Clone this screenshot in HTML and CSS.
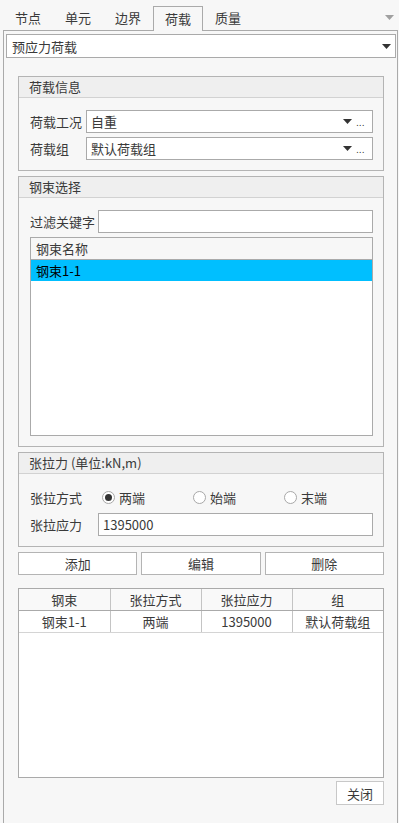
FILE: index.html
```html
<!DOCTYPE html>
<html lang="zh-CN">

<head>
    <meta charset="UTF-8" />
    <meta name="viewport" content="width=device-width, initial-scale=1.0" />
    <title>预应力荷载</title>
    <link rel="stylesheet" href="styles.css">
</head>

<body>

    <div class="tabs">
        <div class="tab">节点</div>
        <div class="tab">单元</div>
        <div class="tab">边界</div>
        <div class="tab active">荷载</div>
        <div class="tab">质量</div>
        <svg class="tabs-menu" width="9" height="5" viewBox="0 0 9 5"><path d="M0 0H9L4.5 5Z" fill="#a0a0a0" /></svg>
    </div>

    <div class="panel">
        <div class="select main-select">
            <span class="value">预应力荷载</span>
            <svg class="arrow" width="9" height="5" viewBox="0 0 9 5"><path d="M0 0H9L4.5 5Z" /></svg>
        </div>

        <div class="content">
            <section class="group">
                <div class="group-title">荷载信息</div>
                <div class="group-body">
                    <div class="field short">
                        <label>荷载工况</label>
                        <div class="select">
                            <span class="value">自重</span>
                            <svg class="arrow" width="9" height="5" viewBox="0 0 9 5"><path d="M0 0H9L4.5 5Z" /></svg>
                            <span class="more">...</span>
                        </div>
                    </div>
                    <div class="field short">
                        <label>荷载组</label>
                        <div class="select">
                            <span class="value">默认荷载组</span>
                            <svg class="arrow" width="9" height="5" viewBox="0 0 9 5"><path d="M0 0H9L4.5 5Z" /></svg>
                            <span class="more">...</span>
                        </div>
                    </div>
                </div>
            </section>

            <section class="group">
                <div class="group-title">钢束选择</div>
                <div class="group-body">
                    <div class="field">
                        <label>过滤关键字</label>
                        <div class="input"></div>
                    </div>
                    <div class="list">
                        <div class="list-head">钢束名称</div>
                        <div class="list-item selected">钢束1-1</div>
                    </div>
                </div>
            </section>

            <section class="group">
                <div class="group-title">张拉力 (单位:kN,m)</div>
                <div class="group-body">
                    <div class="field">
                        <label>张拉方式</label>
                        <div class="radios">
                            <span class="radio checked"><i></i>两端</span>
                            <span class="radio"><i></i>始端</span>
                            <span class="radio"><i></i>末端</span>
                        </div>
                    </div>
                    <div class="field">
                        <label>张拉应力</label>
                        <div class="input">1395000</div>
                    </div>
                </div>
            </section>

            <div class="actions">
                <button>添加</button>
                <button>编辑</button>
                <button>删除</button>
            </div>

            <div class="grid">
                <table>
                    <thead>
                        <tr>
                            <th>钢束</th>
                            <th>张拉方式</th>
                            <th>张拉应力</th>
                            <th>组</th>
                        </tr>
                    </thead>
                    <tbody>
                        <tr>
                            <td>钢束1-1</td>
                            <td>两端</td>
                            <td>1395000</td>
                            <td>默认荷载组</td>
                        </tr>
                    </tbody>
                </table>
            </div>

            <div class="footer">
                <button class="close">关闭</button>
            </div>
        </div>
    </div>

</body>

</html>
```

FILE: styles.css
```css
body {
    margin: 0;
    width: 399px;
    height: 823px;
    overflow: hidden;
    background: #f7f7f7;
    font-family: "Noto Sans CJK SC", "Noto Sans", sans-serif;
    font-size: 13px;
    color: #3a3a3a;
}

/* tab strip */
.tabs {
    position: relative;
    display: flex;
    align-items: flex-end;
    height: 30px;
    padding-left: 3px;
}

.tab {
    width: 50px;
    height: 24px;
    line-height: 24px;
    text-align: center;
    box-sizing: border-box;
}

.tab.active {
    height: 25px;
    margin-bottom: -1px;
    border: 1px solid #aaa;
    border-bottom: none;
    background: #f7f7f7;
    position: relative;
    z-index: 1;
    line-height: 23px;
}

.tabs-menu {
    position: absolute;
    right: 5px;
    top: 15px;
}

.panel {
    margin-left: 3px;
    width: 395px;
    height: 793px;
    box-sizing: border-box;
    border: 1px solid #aaa;
    border-bottom: none;
    padding-top: 3px;
}

/* combo boxes and text boxes */
.select,
.input {
    display: flex;
    align-items: center;
    height: 23px;
    box-sizing: border-box;
    border: 1px solid #aaa;
    background: #fff;
    padding-left: 4px;
}

.select .value {
    flex: 1;
}

.arrow {
    fill: #333;
}

.main-select {
    margin: 0 1px 0 2px;
    height: 24px;
    padding-left: 5px;
    padding-right: 4px;
}

.more {
    width: 14px;
    margin-left: 4px;
    font-family: "DejaVu Sans", sans-serif;
    font-size: 9px;
    line-height: 9px;
    color: #333;
    padding-top: 3px;
}

.content {
    margin: 18px 13px 0 14px;
}

/* group boxes */
.group {
    border: 1px solid #b4b4b4;
    margin-bottom: 5px;
}

.group-title {
    height: 20px;
    line-height: 20px;
    padding-left: 10px;
    background: #efefef;
    border-bottom: 1px solid #d2d2d2;
}

.group-body {
    display: flex;
    flex-direction: column;
    gap: 4px;
    padding: 12px 10px 10px 11px;
}

.field {
    display: flex;
    align-items: center;
}

.field label {
    width: 68px;
    flex: none;
}

.field.short label {
    width: 56px;
}

.field .select,
.field .input {
    flex: 1;
}

.field .select {
    padding-right: 2px;
}

/* tendon list */
.list {
    height: 199px;
    box-sizing: border-box;
    border: 1px solid #aaa;
    background: #fff;
}

.list-head {
    height: 21px;
    line-height: 21px;
    padding-left: 5px;
    background: #f7f7f7;
    border-bottom: 1px solid #aaa;
}

.list-item {
    height: 21px;
    line-height: 21px;
    padding-left: 5px;
}

.list-item.selected {
    background: #00bfff;
    color: #000;
}

/* radios */
.radios {
    display: flex;
    height: 23px;
    align-items: center;
    padding-left: 4px;
}

.radio {
    width: 91px;
    display: flex;
    align-items: center;
}

.radio i {
    width: 13px;
    height: 13px;
    box-sizing: border-box;
    border: 1px solid #a8a8a8;
    border-radius: 50%;
    background: #fff;
    margin-right: 4px;
    display: flex;
    align-items: center;
    justify-content: center;
}

.radio.checked i::after {
    content: "";
    width: 7px;
    height: 7px;
    border-radius: 50%;
    background: #333;
}

/* buttons */
.actions {
    display: grid;
    grid-template-columns: 1fr 1fr 1fr;
    gap: 4px;
}

button {
    height: 23px;
    font-family: inherit;
    font-size: 13px;
    color: #3a3a3a;
    background: #fff;
    border: 1px solid #b4b4b4;
    padding: 0;
}

/* result table */
.grid {
    margin-top: 13px;
    height: 190px;
    box-sizing: border-box;
    border: 1px solid #aaa;
    background: #fff;
}

table {
    width: 100%;
    border-collapse: collapse;
    table-layout: fixed;
}

th,
td {
    height: 21px;
    padding: 0;
    font-weight: normal;
    text-align: center;
    border-right: 1px solid #c4c4c4;
    border-bottom: 1px solid #d4d4d4;
}

th {
    background: #f9f9f9;
    border-bottom-color: #aaa;
}

th:last-child,
td:last-child {
    border-right: none;
}

.footer {
    display: flex;
    justify-content: flex-end;
    margin-top: 3px;
}

.close {
    width: 48px;
    height: 24px;
    border-color: #c8c8c8;
}
```
